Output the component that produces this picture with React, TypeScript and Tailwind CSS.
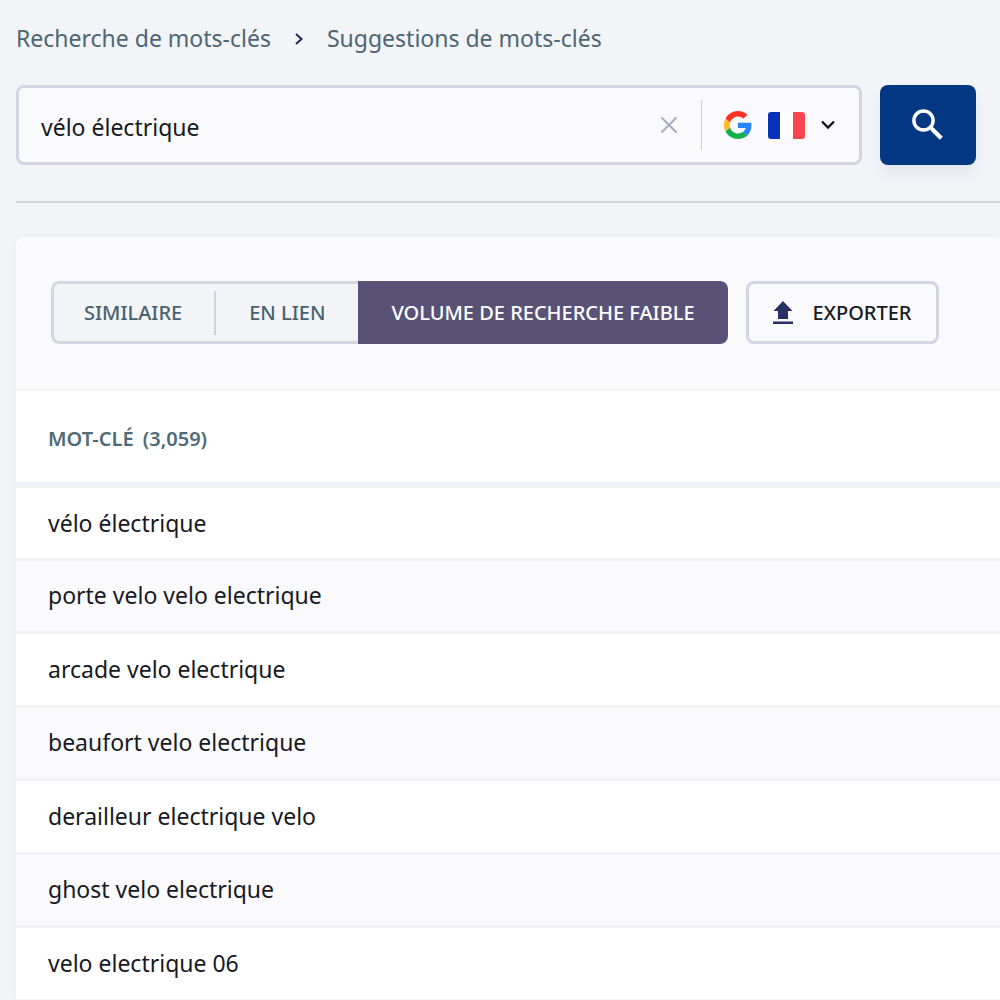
import { useState } from "react";

const keywords = [
  "vélo électrique",
  "porte velo velo electrique",
  "arcade velo electrique",
  "beaufort velo electrique",
  "derailleur electrique velo",
  "ghost velo electrique",
  "velo electrique 06",
];

function ChevronRight() {
  return (
    <svg viewBox="0 0 8 12" className="h-3 w-2 shrink-0" fill="none" stroke="#23285a" strokeWidth="2" aria-hidden="true">
      <path d="M1 1l5.5 5L1 11" />
    </svg>
  );
}

function GoogleLogo() {
  return (
    <svg viewBox="0 0 48 48" className="size-7 shrink-0" aria-label="Google" role="img">
      <path fill="#ff3224" d="M24 9.5c3.54 0 6.71 1.22 9.21 3.6l6.85-6.85C35.9 2.38 30.47 0 24 0 14.62 0 6.51 5.38 2.56 13.22l7.98 6.19C12.43 13.72 17.74 9.5 24 9.5z" />
      <path fill="#2684fc" d="M46.98 24.55c0-1.57-.15-3.09-.38-4.55H24v9.02h12.94c-.58 2.96-2.26 5.48-4.78 7.18l7.73 6c4.51-4.18 7.09-10.36 7.09-17.65z" />
      <path fill="#ffba24" d="M10.53 28.59c-.48-1.45-.76-2.99-.76-4.59s.27-3.14.76-4.59l-7.98-6.19C.92 16.46 0 20.12 0 24c0 3.88.92 7.54 2.56 10.78l7.97-6.19z" />
      <path fill="#13b04b" d="M24 48c6.48 0 11.93-2.13 15.89-5.81l-7.73-6c-2.15 1.45-4.92 2.3-8.16 2.3-6.26 0-11.57-4.22-13.47-9.91l-7.98 6.19C6.51 42.62 14.62 48 24 48z" />
    </svg>
  );
}

function FrenchFlag() {
  return (
    <span className="flex h-[27px] w-[37px] shrink-0 overflow-hidden rounded-[3px]" role="img" aria-label="France">
      <span className="flex-1 bg-[#0733bb]" />
      <span className="flex-1 bg-white" />
      <span className="flex-1 bg-[#fc4552]" />
    </span>
  );
}

export default function App() {
  const [query, setQuery] = useState("vélo électrique");
  const [tab, setTab] = useState(2);

  const tabClass = (i: number) =>
    tab === i
      ? "bg-[#5a5276] text-white"
      : "border-y-3 border-[#d4d6e2] bg-[#f2f4f8] text-[#47626d]";

  return (
    <div className="flex min-h-screen flex-col overflow-x-hidden bg-[#f2f4f8] pl-4 font-['Noto_Sans',sans-serif] text-[#171923]">
      <nav aria-label="Fil d’Ariane" className="flex h-[77px] items-center text-[23px] text-[#4c6673]">
        <a href="#recherche">Recherche de mots-clés</a>
        <span className="mx-6"><ChevronRight /></span>
        <a href="#suggestions">Suggestions de mots-clés</a>
      </nav>

      <form className="mt-2 flex gap-[18px] pr-6" onSubmit={(e) => e.preventDefault()}>
        <div className="flex h-20 min-w-0 flex-1 items-center rounded-lg border-3 border-[#d4d5e3] bg-[#fafafd] pr-6">
          <input
            aria-label="Mot-clé"
            className="h-full min-w-0 flex-1 bg-transparent pt-1 pl-[22px] text-[23px] outline-none"
            value={query}
            onChange={(e) => setQuery(e.target.value)}
          />
          <button type="button" aria-label="Effacer" className="mr-[23px]" onClick={() => setQuery("")}>
            <svg viewBox="0 0 18 18" className="size-[18px]" fill="none" stroke="#a9aac2" strokeWidth="2">
              <path d="M1.5 1.5l15 15M16.5 1.5l-15 15" />
            </svg>
          </button>
          <span className="h-[50px] w-px bg-[#cfcfdd]" />
          <button type="button" aria-label="Google, France" aria-haspopup="listbox" className="flex items-center pl-[22px]">
            <GoogleLogo />
            <span className="mx-4"><FrenchFlag /></span>
            <svg viewBox="0 0 14 10" className="h-[10px] w-[14px]" fill="none" stroke="#12141c" strokeWidth="2.3" aria-hidden="true">
              <path d="M1 1.5l6 6 6-6" />
            </svg>
          </button>
        </div>
        <button type="submit" aria-label="Rechercher" className="flex h-20 w-24 items-center justify-center rounded-lg bg-[#033781] shadow-[0_10px_14px_rgba(40,50,80,0.06)]">
          <svg viewBox="0 0 32 32" className="size-8" fill="none" stroke="white" aria-hidden="true">
            <circle cx="11.5" cy="11.5" r="9.6" strokeWidth="3.5" />
            <path d="M18.5 18.5l3 2.5" strokeWidth="3.2" />
            <path d="M20 20l9.3 9.3" strokeWidth="4.3" />
          </svg>
        </button>
      </form>

      <hr className="mt-9 border-t-2 border-[#d3d5e1]" />

      <main className="mt-[34px] flex-1 rounded-tl-lg bg-[#fafafd] shadow-[0_0_10px_rgba(40,50,90,0.04)]">
        <div className="flex gap-[18px] border-b-3 border-[#f2f4f8] pt-11 pr-6 pb-11 pl-[35px] text-xl font-medium">
          <div role="tablist" className="flex h-[63px] overflow-hidden rounded-lg whitespace-nowrap">
            <button role="tab" aria-selected={tab === 0} onClick={() => setTab(0)} className={`rounded-l-lg border-l-3 pl-[30px] ${tabClass(0)}`}>
              <span className="flex h-11 items-center border-r-2 border-[#d0d2df] pr-8">SIMILAIRE</span>
            </button>
            <button role="tab" aria-selected={tab === 1} onClick={() => setTab(1)} className={`px-[33px] ${tabClass(1)}`}>
              EN LIEN
            </button>
            <button role="tab" aria-selected={tab === 2} onClick={() => setTab(2)} className={`px-[33px] ${tabClass(2)}`}>
              VOLUME DE RECHERCHE FAIBLE
            </button>
          </div>
          <button className="flex h-[63px] items-center rounded-lg border-3 border-[#d4d6e5] bg-[#fafafd] px-6 text-[#171923]">
            <svg viewBox="0 0 20 24" className="mr-5 h-6 w-5" fill="#272f63" aria-hidden="true">
              <path d="M10 0l9.5 10H15v8H5v-8H.5zM0 20.5h20v2.5H0z" />
            </svg>
            EXPORTER
          </button>
        </div>

        <table className="w-full border-collapse text-left">
          <thead>
            <tr className="border-b-6 border-[#f2f3f8] bg-white">
              <th scope="col" className="h-[94px] pt-1 pl-8 text-xl font-semibold text-[#4f6b76]">
                MOT-CLÉ <span className="ml-1">(3,059)</span>
              </th>
            </tr>
          </thead>
          <tbody>
            {keywords.map((k) => (
              <tr key={k} className="border-b-3 border-[#f2f3f7] odd:h-[74px] odd:bg-white even:h-[73px] even:bg-[#fafafd]">
                <td className="pl-8 text-[23px]">{k}</td>
              </tr>
            ))}
          </tbody>
        </table>
      </main>
    </div>
  );
}
